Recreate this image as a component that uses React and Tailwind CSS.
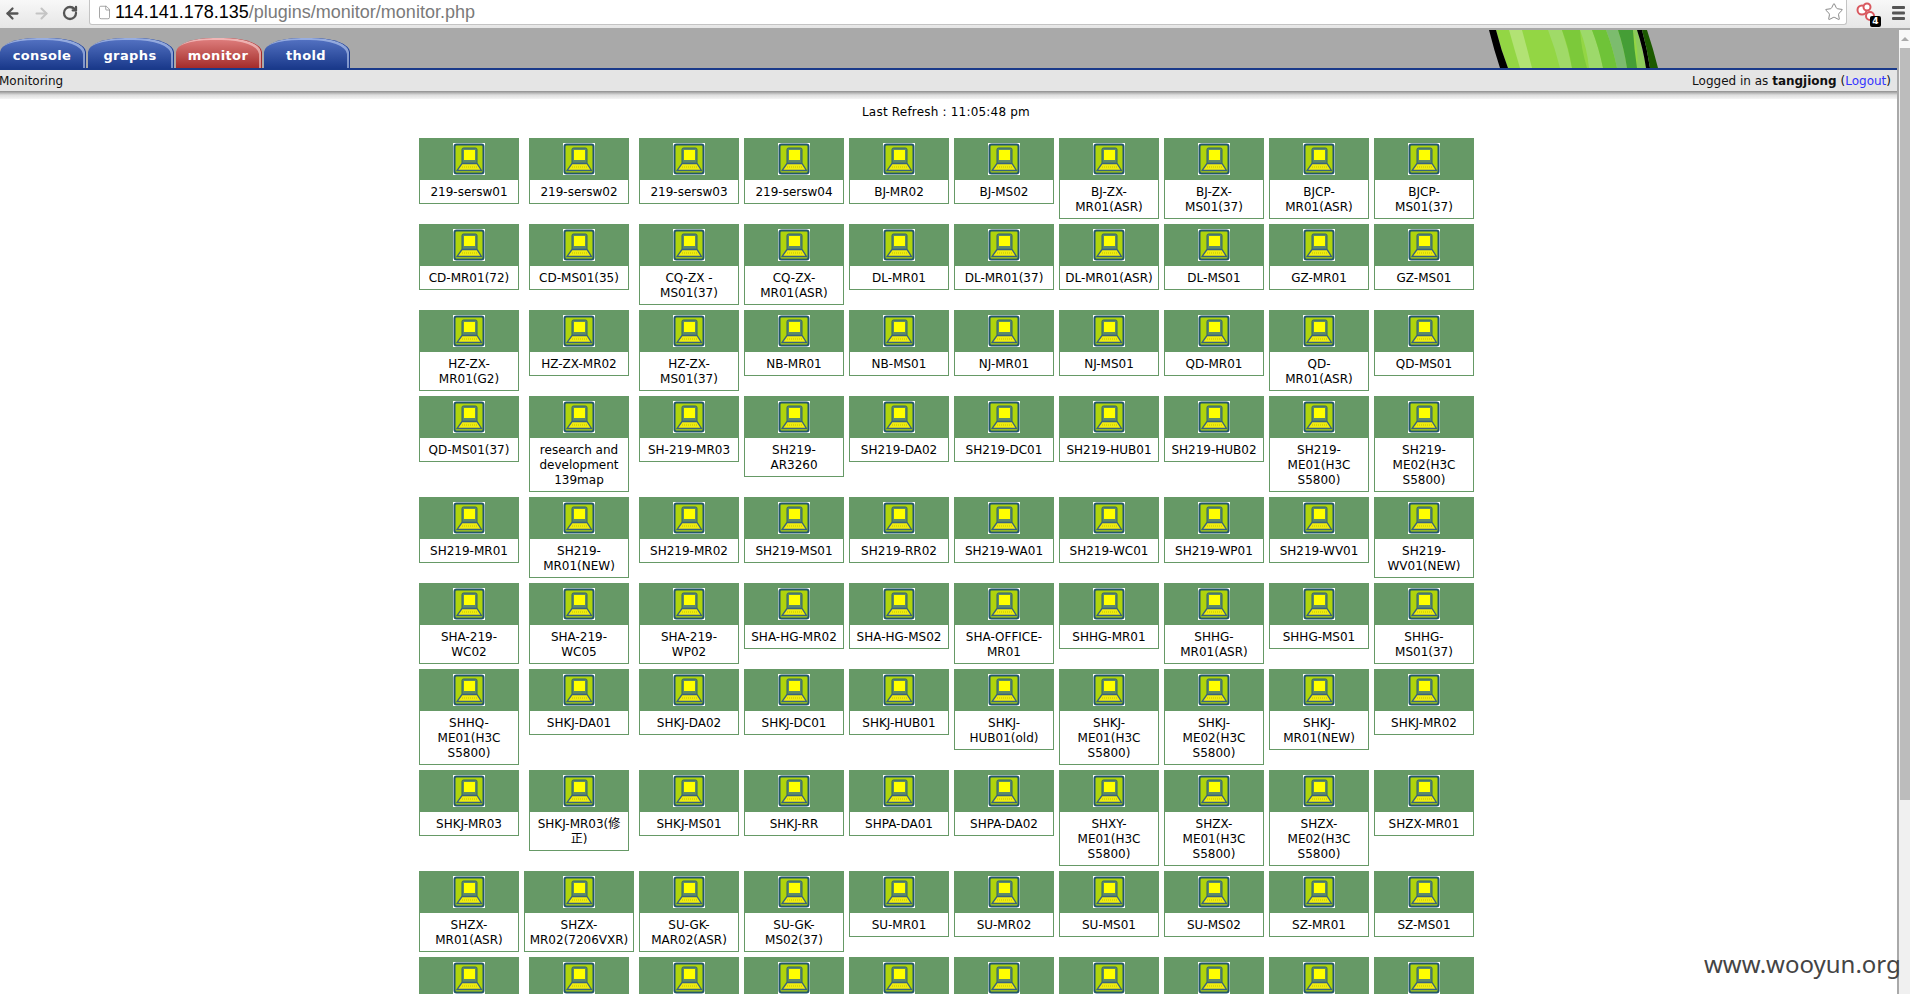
import { ArrowLeft, ArrowRight, RotateCw, File, Star } from 'lucide-react'

const rows = [
  ['219-sersw01', '219-sersw02', '219-sersw03', '219-sersw04', 'BJ-MR02', 'BJ-MS02', 'BJ-ZX-MR01(ASR)', 'BJ-ZX-MS01(37)', 'BJCP-MR01(ASR)', 'BJCP-MS01(37)'],
  ['CD-MR01(72)', 'CD-MS01(35)', 'CQ-ZX - MS01(37)', 'CQ-ZX-MR01(ASR)', 'DL-MR01', 'DL-MR01(37)', 'DL-MR01(ASR)', 'DL-MS01', 'GZ-MR01', 'GZ-MS01'],
  ['HZ-ZX-MR01(G2)', 'HZ-ZX-MR02', 'HZ-ZX-MS01(37)', 'NB-MR01', 'NB-MS01', 'NJ-MR01', 'NJ-MS01', 'QD-MR01', 'QD-MR01(ASR)', 'QD-MS01'],
  ['QD-MS01(37)', 'research and development 139map', 'SH-219-MR03', 'SH219-AR3260', 'SH219-DA02', 'SH219-DC01', 'SH219-HUB01', 'SH219-HUB02', 'SH219-ME01(H3C S5800)', 'SH219-ME02(H3C S5800)'],
  ['SH219-MR01', 'SH219-MR01(NEW)', 'SH219-MR02', 'SH219-MS01', 'SH219-RR02', 'SH219-WA01', 'SH219-WC01', 'SH219-WP01', 'SH219-WV01', 'SH219-WV01(NEW)'],
  ['SHA-219-WC02', 'SHA-219-WC05', 'SHA-219-WP02', 'SHA-HG-MR02', 'SHA-HG-MS02', 'SHA-OFFICE-MR01', 'SHHG-MR01', 'SHHG-MR01(ASR)', 'SHHG-MS01', 'SHHG-MS01(37)'],
  ['SHHQ-ME01(H3C S5800)', 'SHKJ-DA01', 'SHKJ-DA02', 'SHKJ-DC01', 'SHKJ-HUB01', 'SHKJ-HUB01(old)', 'SHKJ-ME01(H3C S5800)', 'SHKJ-ME02(H3C S5800)', 'SHKJ-MR01(NEW)', 'SHKJ-MR02'],
  ['SHKJ-MR03', 'SHKJ-MR03(修正)', 'SHKJ-MS01', 'SHKJ-RR', 'SHPA-DA01', 'SHPA-DA02', 'SHXY-ME01(H3C S5800)', 'SHZX-ME01(H3C S5800)', 'SHZX-ME02(H3C S5800)', 'SHZX-MR01'],
  ['SHZX-MR01(ASR)', 'SHZX-MR02(7206VXR)', 'SU-GK-MAR02(ASR)', 'SU-GK-MS02(37)', 'SU-MR01', 'SU-MR02', 'SU-MS01', 'SU-MS02', 'SZ-MR01', 'SZ-MS01'],
  ['', '', '', '', '', '', '', '', '', ''],
]

const tabs = [
  { name: 'console', red: false },
  { name: 'graphs', red: false },
  { name: 'monitor', red: true },
  { name: 'thold', red: false },
]

// stripes of the green banner, left to right
const stripes = [
  ['M7 0 Q12 20 19 38 H157 Q153 18 148 0Z', '#93d644'],
  ['M20 0 Q25 18 31 38 H43 Q38 18 33 0Z', '#b2e274'],
  ['M59 0 Q66 18 71 38 H83 Q79 18 73 0Z', '#a0da68'],
  ['M73 0 Q80 18 83 38 H98 Q92 18 91 0Z', '#7cc93a'],
  ['M91 0 Q98 18 100 38 H114 Q110 18 103 0Z', '#9dd96b'],
  ['M103 0 Q110 18 114 38 H128 Q124 18 117 0Z', '#6fc338'],
  ['M117 0 Q124 18 128 38 H138 Q135 18 129 0Z', '#7cbc6e'],
  ['M129 0 Q135 18 138 38 H148 Q145 18 144 0Z', '#459e36'],
  ['M144 0 Q150 18 148 38 H157 Q153 18 148 0Z', '#8ccb5c'],
  ['M148 0 Q154 18 157 38 H161 Q158 18 153 0Z', '#000000'],
  ['M153 0 Q158 18 161 38 H169 Q164 18 158 0Z', '#1c5a00'],
  ['M0 0 Q5 20 11 38 H19 Q12 20 7 0Z', '#000000'],
]

function LaptopIcon() {
  return (
    <svg width="32" height="32" viewBox="0 0 32 32" className="block">
      <rect width="32" height="32" fill="#fff" />
      <rect x="1.5" y="1.5" width="29" height="29" rx="2" fill="#b0d40c" stroke="#22586a" strokeWidth="2" />
      <rect x="9" y="5" width="15" height="16" rx="1.5" fill="#5d8a6a" stroke="#2f6070" />
      <rect x="11" y="7" width="11" height="10" fill="#ffff00" />
      <path d="M9 20.5H24L28.5 27.5H4Z" fill="#f0ec10" stroke="#38627c" strokeWidth="1.3" />
      <path d="M9 24H24" stroke="#c0c000" strokeDasharray="1 1" />
    </svg>
  )
}

function DeviceCard({ name }) {
  const wide = name === 'SHZX-MR02(7206VXR)'
  return (
    <div className={`${wide ? 'w-[110px]' : 'w-[100px]'} border border-[#669966] bg-white`}>
      <div className="flex h-[41px] items-start justify-center bg-[#669966] pt-[4px]">
        <LaptopIcon />
      </div>
      <div className="px-[4.5px] pb-[3px] pt-[5px] text-center text-[12px] leading-[15px] text-black">{name}</div>
    </div>
  )
}

function BrowserBar() {
  return (
    <div className="flex h-[30px] shrink-0 items-start border-b-2 border-[#a9a9a9] bg-gradient-to-b from-[#f8f8f8] to-[#e6e6e6]">
      <div className="flex h-[26px] w-[89px] shrink-0 items-center gap-[12px] pl-[4px] text-[#555]">
        <ArrowLeft size={17} strokeWidth={3.2} />
        <ArrowRight size={17} strokeWidth={3} className="text-[#c4c4c4]" />
        <RotateCw size={16} strokeWidth={3.4} />
      </div>
      <div className="flex h-[25px] w-[1758px] items-center rounded-b-[3px] border-x border-b border-[#c4c4c4] bg-white pl-[7px] font-['Liberation_Sans',sans-serif] text-[18px]">
        <File size={15} strokeWidth={1.2} className="text-[#888]" />
        <span className="ml-[3px] text-black">114.141.178.135</span>
        <span className="text-[#7a7a7a]">/plugins/monitor/monitor.php</span>
        <Star size={20} strokeWidth={1.2} className="ml-auto mr-[2px] text-[#8a8a8a]" />
      </div>
      <div className="relative h-[28px] w-[63px] shrink-0">
        <svg width="63" height="28" viewBox="0 0 63 28" className="block">
          <g fill="#fff" stroke="#d9585f" strokeWidth="2">
            <circle cx="15" cy="10" r="4.5" />
            <circle cx="20" cy="7" r="3.5" />
            <circle cx="23" cy="16" r="4" />
          </g>
          <g fill="#555">
            <rect x="45" y="6" width="13" height="3" rx="1" />
            <rect x="45" y="11.5" width="13" height="3" rx="1" />
            <rect x="45" y="17" width="13" height="3" rx="1" />
          </g>
        </svg>
        <span className="absolute left-[23px] top-[16px] flex h-[11px] w-[11px] items-center justify-center rounded-[2px] bg-black text-[9px] font-bold leading-none text-white">4</span>
      </div>
    </div>
  )
}

function TopNav() {
  return (
    <div className="flex h-[40px] shrink-0 items-end justify-between border-b-2 border-[#1a3a8a] bg-[#a9a9a9]">
      <div className="flex items-end gap-[2px]">
        {tabs.map((t) => (
          <div
            key={t.name}
            className={`flex h-[30px] w-[86px] items-center justify-center rounded-t-[38px_14px] pr-[2px] pt-[5px] text-[13px] font-bold tracking-[0.4px] text-white ${
              t.red
                ? 'bg-gradient-to-b from-[#e08080] to-[#a32a2a] shadow-[inset_-1px_0_0_#a32a2a,inset_-3px_2px_0_rgba(255,225,225,0.55)]'
                : 'bg-gradient-to-b from-[#5674c4] to-[#1b3a8c] shadow-[inset_-1px_0_0_#1b3a8c,inset_-3px_2px_0_rgba(205,220,250,0.55)]'
            }`}
          >
            {t.name}
          </div>
        ))}
      </div>
      <svg width="170" height="38" viewBox="0 0 170 38" className="mr-[238px] block">
        {stripes.map(([d, fill]) => (
          <path key={d} d={d} fill={fill} />
        ))}
      </svg>
    </div>
  )
}

export default function App() {
  return (
    <div className="relative flex h-[994px] w-full flex-col overflow-hidden bg-white font-['DejaVu_Sans','Noto_Sans_CJK_SC',sans-serif]">
      <BrowserBar />
      <div className="flex min-h-0 flex-1">
        <div className="flex min-w-0 flex-1 flex-col border-r-2 border-[#a9a9a9]">
          <TopNav />
          <div className="flex h-[21px] shrink-0 items-center justify-between bg-[#e5e5e5] pr-[6px] text-[12px] text-[#111]">
            <span className="-ml-[1px]">Monitoring</span>
            <span>
              Logged in as <b>tangjiong</b> (<span className="text-[#3333ff]">Logout</span>)
            </span>
          </div>
          <div className="h-[8px] shrink-0 bg-gradient-to-b from-[#8f8f8f] via-[#dedede] to-[#f4f4f4]" />
          <p className="mt-[6px] h-[15px] pr-[5px] text-center text-[12px] leading-[15px] tracking-[0.2px] text-black">Last Refresh : 11:05:48 pm</p>
          <div className="mt-[18px] ml-[419px] grid grid-cols-[100px_110px_repeat(8,100px)] items-start justify-items-center gap-[5px]">
            {rows.map((row, i) => row.map((name, j) => <DeviceCard key={`${i}-${j}`} name={name} />))}
          </div>
        </div>
        <div className="flex w-[11px] shrink-0 flex-col items-end bg-[#f0f0f0]">
          <div className="flex h-[18px] w-full items-center justify-center bg-[#f8f8f8]">
            <div className="h-0 w-0 border-x-[4px] border-b-[4px] border-x-transparent border-b-[#aaa]" />
          </div>
          <div className="h-[752px] w-[10px] bg-[#bcbcbc]" />
        </div>
      </div>
      <span className="absolute left-[1704px] top-[946px] font-['Noto_Sans',sans-serif] text-[24px] text-[#444]">www.wooyun.org</span>
    </div>
  )
}
